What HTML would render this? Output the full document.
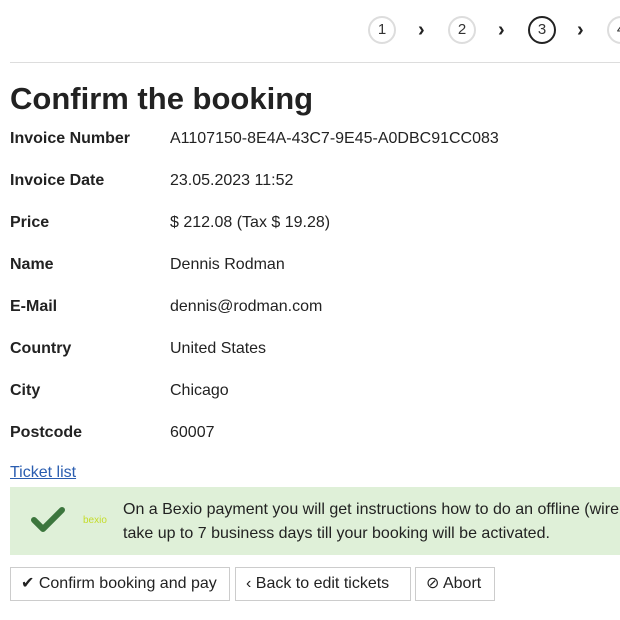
<!DOCTYPE html>
<html><head><style>
body{margin:0;width:620px;height:620px;overflow:hidden;background:#fff;font-family:"Liberation Sans",Arial,sans-serif;color:#222;position:relative}
.c{position:absolute;width:28px;height:28px;border:2px solid #ddd;border-radius:50%;box-sizing:border-box;text-align:center;line-height:24px;font-size:15px;top:16px;color:#333}
.ar{position:absolute;top:19px;font-size:20px;font-weight:bold;color:#222}
.hr{position:absolute;left:10px;right:0;top:62px;border-top:1px solid #ddd}
h1{position:absolute;left:10px;top:81px;margin:0;font-size:31px;font-weight:bold;color:#222}
.l{position:absolute;left:10px;font-size:16px;font-weight:bold}
.v{position:absolute;left:170px;font-size:16px}
a{position:absolute;left:10px;top:464px;font-size:16px;color:#2a5db0;text-decoration:underline}
.box{position:absolute;left:10px;right:0;top:487px;height:68px;background:#dff0d8}
.btn{position:absolute;top:567px;height:34px;border:1px solid #ccc;box-sizing:border-box;font-size:16px;line-height:32px;padding:0 10px;color:#222;background:#fff;white-space:nowrap}
</style></head><body>
<div class="c" style="left:368px">1</div><div class="ar" style="left:418px">›</div>
<div class="c" style="left:448px">2</div><div class="ar" style="left:498px">›</div>
<div class="c" style="left:528px;border-color:#222">3</div><div class="ar" style="left:577px">›</div>
<div class="c" style="left:607px">4</div>
<div class="hr"></div>
<h1>Confirm the booking</h1>
<div class="l" style="top:130px">Invoice Number</div><div class="v" style="top:130px">A1107150-8E4A-43C7-9E45-A0DBC91CC083</div>
<div class="l" style="top:172px">Invoice Date</div><div class="v" style="top:172px">23.05.2023 11:52</div>
<div class="l" style="top:214px">Price</div><div class="v" style="top:214px">$ 212.08 (Tax $ 19.28)</div>
<div class="l" style="top:256px">Name</div><div class="v" style="top:256px">Dennis Rodman</div>
<div class="l" style="top:298px">E-Mail</div><div class="v" style="top:298px">dennis@rodman.com</div>
<div class="l" style="top:340px">Country</div><div class="v" style="top:340px">United States</div>
<div class="l" style="top:382px">City</div><div class="v" style="top:382px">Chicago</div>
<div class="l" style="top:424px">Postcode</div><div class="v" style="top:424px">60007</div>
<a>Ticket list</a>
<div class="box">
<svg style="position:absolute;left:20px;top:18px" width="36" height="30" viewBox="0 0 36 30"><path d="M4 15 L13 24 L32 5" stroke="#3c763d" stroke-width="6" fill="none" stroke-linecap="round" stroke-linejoin="round"/></svg>
<div style="position:absolute;left:73px;top:28px;font-size:10px;color:#c5dc2a">bexio</div>
<div style="position:absolute;left:113px;top:11px;font-size:16px;line-height:24px;white-space:nowrap;color:#222">On a Bexio payment you will get instructions how to do an offline (wire<br>take up to 7 business days till your booking will be activated.</div>
</div>
<div class="btn" style="left:10px;width:220px">✔ Confirm booking and pay</div>
<div class="btn" style="left:235px;width:176px">‹ Back to edit tickets</div>
<div class="btn" style="left:415px;width:80px">⊘ Abort</div>
</body></html>
